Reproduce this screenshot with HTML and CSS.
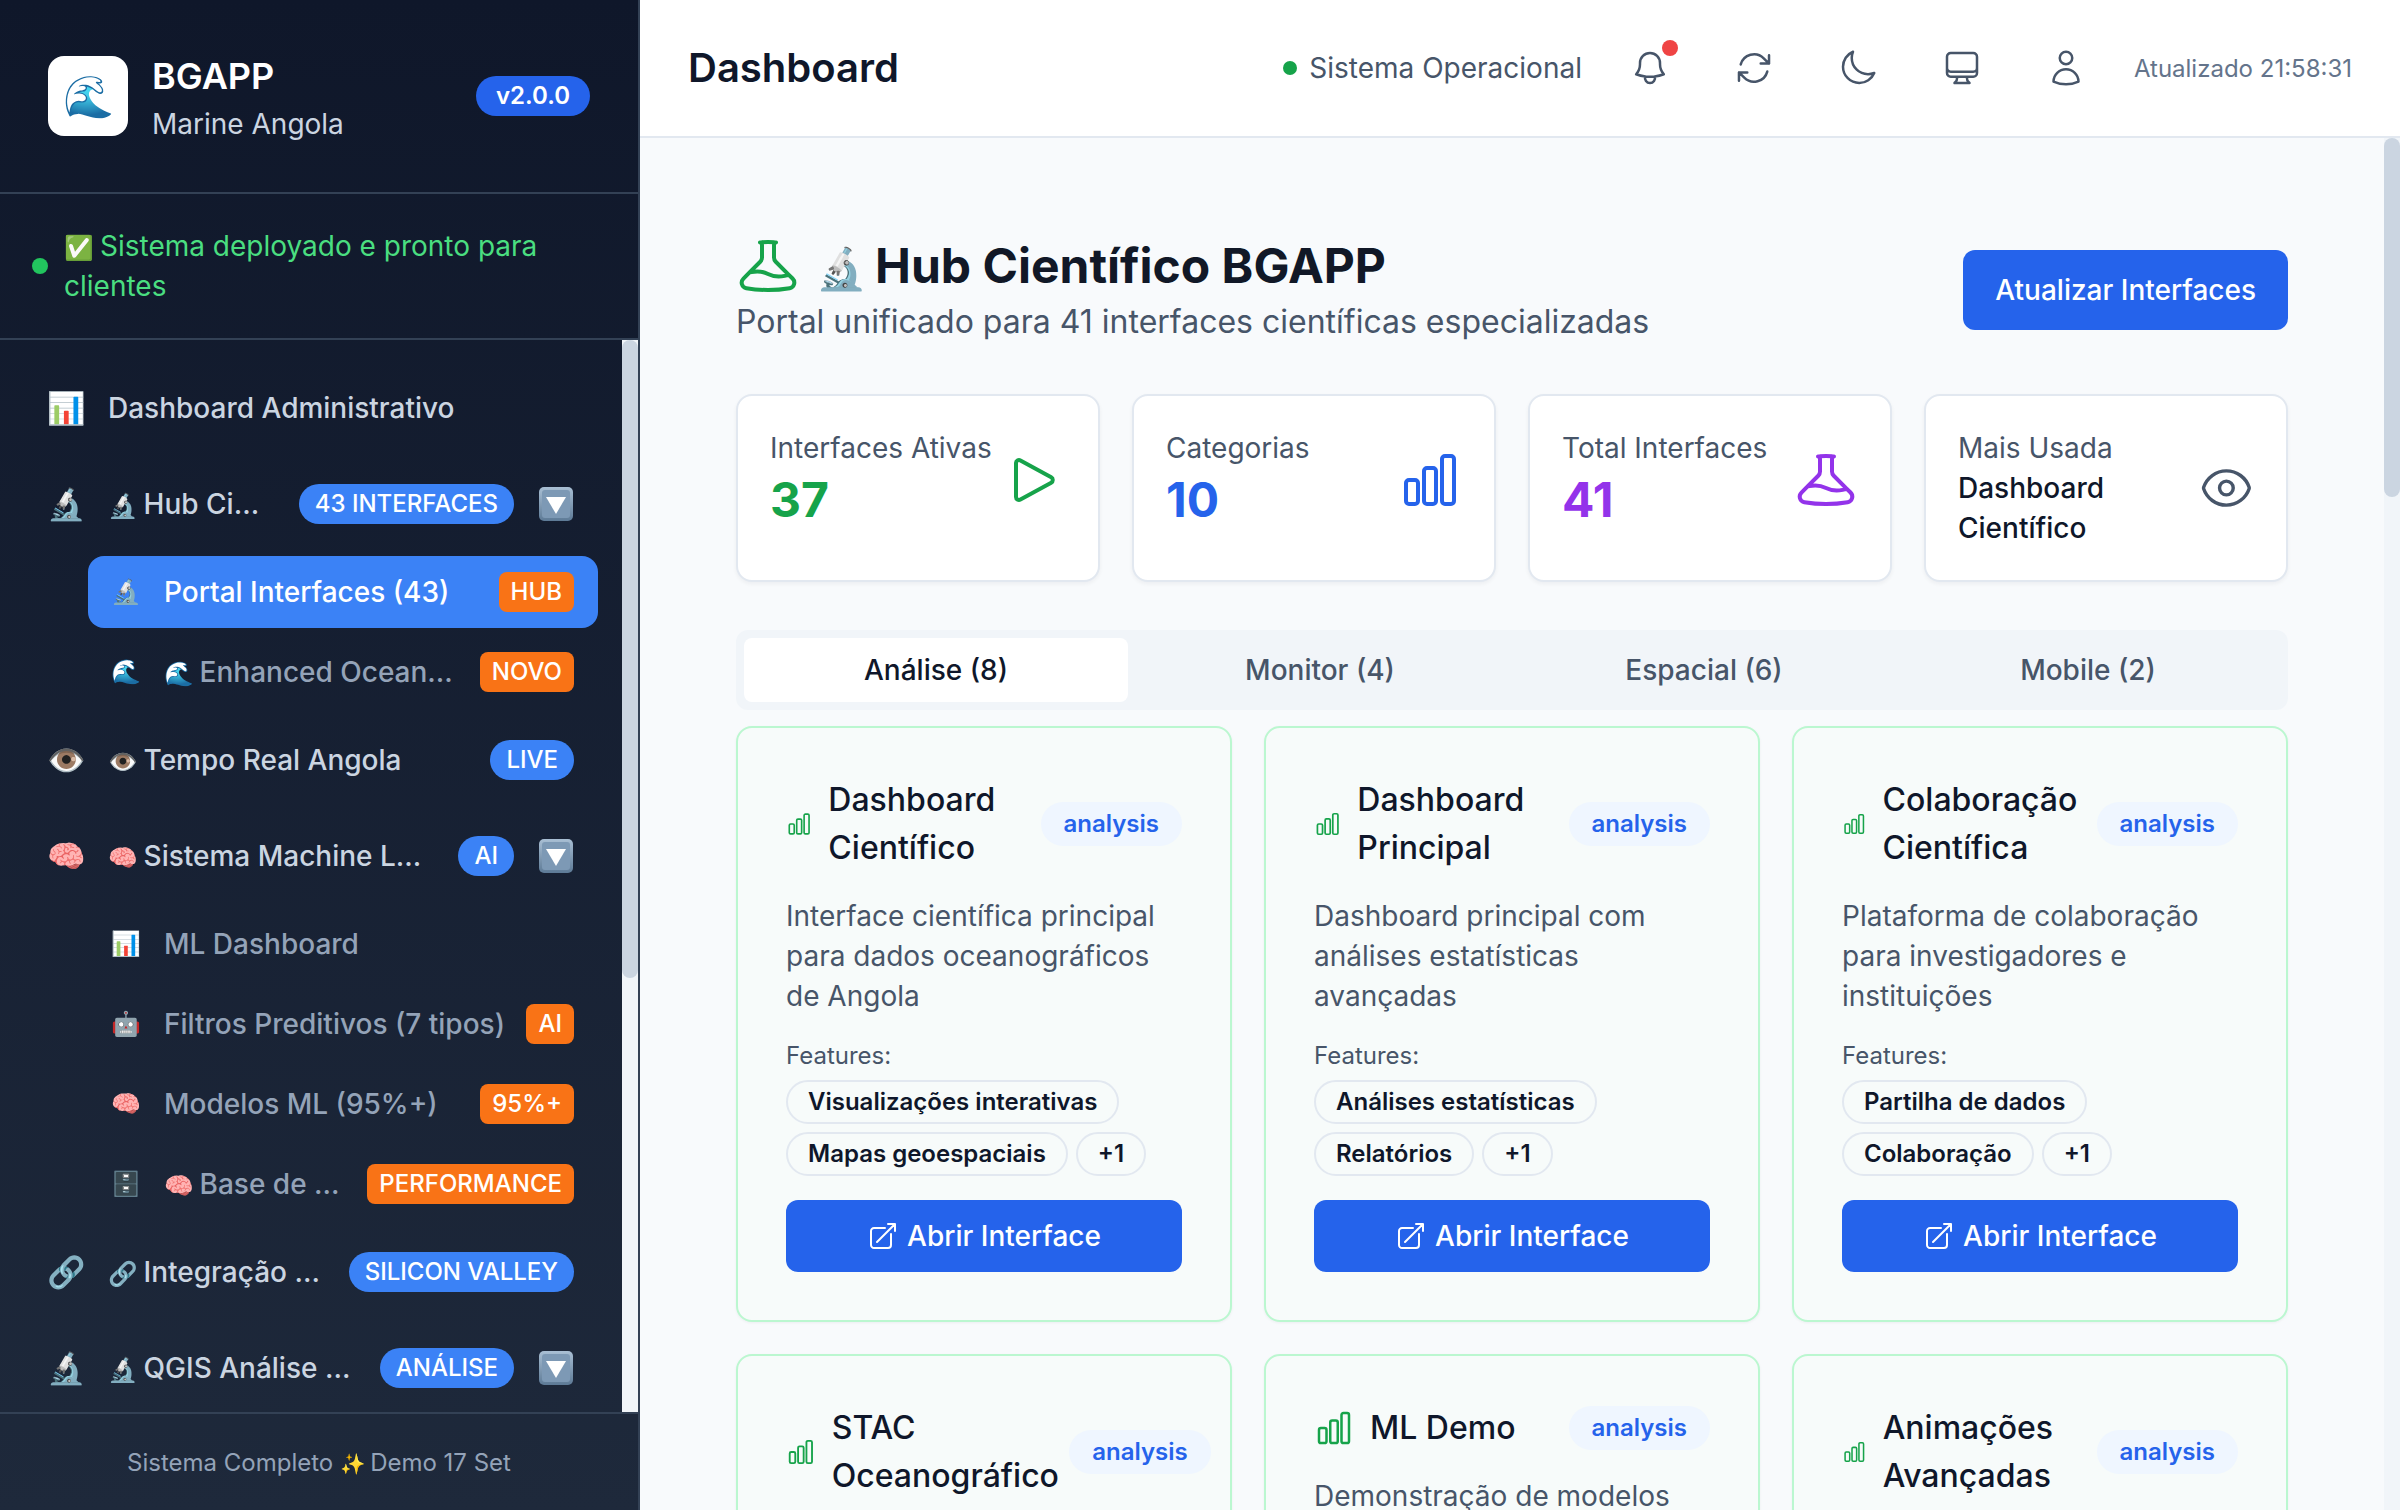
FILE: index.html
```html
<!DOCTYPE html>
<html lang="pt">
<head><meta charset="utf-8"><title>BGAPP</title><link rel="stylesheet" href="styles.css"></head>
<body>
<svg class="defs" width="0" height="0" aria-hidden="true">
<defs><linearGradient id="g-chev" x1="0" y1="0" x2="0" y2="1"><stop offset="0" stop-color="#a9bfd4"/><stop offset="1" stop-color="#5d7a96"/></linearGradient></defs>
<symbol id="i-chev" viewBox="0 0 36 36"><rect x="1" y="1" width="34" height="34" rx="5" fill="url(#g-chev)"/><rect x="4" y="4" width="28" height="28" rx="3" fill="#7d99b5"/><path d="M8 11h20L18 28Z" fill="#fff"/></symbol>
<symbol id="i-bell" viewBox="0 0 24 24"><path d="M14.857 17.082a23.848 23.848 0 0 0 5.454-1.31A8.967 8.967 0 0 1 18 9.75V9A6 6 0 0 0 6 9v.75a8.967 8.967 0 0 1-2.312 6.022c1.733.64 3.56 1.085 5.455 1.31m5.714 0a24.255 24.255 0 0 1-5.714 0m5.714 0a3 3 0 1 1-5.714 0"/></symbol>
<symbol id="i-refresh" viewBox="0 0 24 24"><path d="M16.023 9.348h4.992v-.001M2.985 19.644v-4.992m0 0h4.992m-4.993 0 3.181 3.183a8.25 8.25 0 0 0 13.803-3.7M4.031 9.865a8.25 8.25 0 0 1 13.803-3.7l3.181 3.182m0-4.991v4.99"/></symbol>
<symbol id="i-moon" viewBox="0 0 24 24"><path d="M21.752 15.002A9.72 9.72 0 0 1 18 15.75c-5.385 0-9.75-4.365-9.75-9.75 0-1.33.266-2.597.748-3.752A9.753 9.753 0 0 0 3 11.25C3 16.635 7.365 21 12.75 21a9.753 9.753 0 0 0 9.002-5.998Z"/></symbol>
<symbol id="i-desktop" viewBox="0 0 24 24"><path d="M9 17.25v1.007a3 3 0 0 1-.879 2.122L7.5 21h9l-.621-.621A3 3 0 0 1 15 18.257V17.25m6-12V15a2.25 2.25 0 0 1-2.25 2.25H5.25A2.25 2.25 0 0 1 3 15V5.25m18 0A2.25 2.25 0 0 0 18.75 3H5.25A2.25 2.25 0 0 0 3 5.25m18 0V12a2.25 2.25 0 0 1-2.25 2.25H5.25A2.25 2.25 0 0 1 3 12V5.25"/></symbol>
<symbol id="i-user" viewBox="0 0 24 24"><path d="M15.75 6a3.75 3.75 0 1 1-7.5 0 3.75 3.75 0 0 1 7.5 0ZM4.501 20.118a7.5 7.5 0 0 1 14.998 0A17.933 17.933 0 0 1 12 21.75c-2.676 0-5.216-.584-7.499-1.632Z"/></symbol>
<symbol id="i-play" viewBox="0 0 24 24"><path d="M5.25 5.653c0-.856.917-1.398 1.667-.986l11.54 6.347a1.125 1.125 0 0 1 0 1.972l-11.54 6.347a1.125 1.125 0 0 1-1.667-.986V5.653Z"/></symbol>
<symbol id="i-chart" viewBox="0 0 24 24"><path d="M3 13.125C3 12.504 3.504 12 4.125 12h2.25c.621 0 1.125.504 1.125 1.125v6.75C7.5 20.496 6.996 21 6.375 21h-2.25A1.125 1.125 0 0 1 3 19.875v-6.75ZM9.75 8.625c0-.621.504-1.125 1.125-1.125h2.25c.621 0 1.125.504 1.125 1.125v11.25c0 .621-.504 1.125-1.125 1.125h-2.25a1.125 1.125 0 0 1-1.125-1.125V8.625ZM16.5 4.125c0-.621.504-1.125 1.125-1.125h2.25C20.496 3 21 3.504 21 4.125v15.75c0 .621-.504 1.125-1.125 1.125h-2.25a1.125 1.125 0 0 1-1.125-1.125V4.125Z"/></symbol>
<symbol id="i-beaker" viewBox="0 0 24 24"><path d="M9.75 3.104v5.714a2.25 2.25 0 0 1-.659 1.591L5 14.5M9.75 3.104c-.251.023-.501.05-.75.082m.75-.082a24.301 24.301 0 0 1 4.5 0m0 0v5.714c0 .597.237 1.17.659 1.591L19.8 15.3M14.25 3.104c.251.023.501.05.75.082M19.8 15.3l-1.57.393A9.065 9.065 0 0 1 12 15a9.065 9.065 0 0 0-6.23-.693L5 14.5m14.8.8 1.402 1.402c1.232 1.232.65 3.318-1.067 3.611A48.309 48.309 0 0 1 12 21c-2.773 0-5.491-.235-8.135-.687-1.718-.293-2.3-2.379-1.067-3.61L5 14.5"/></symbol>
<symbol id="i-eye" viewBox="0 0 24 24"><path d="M2.036 12.322a1.012 1.012 0 0 1 0-.639C3.423 7.51 7.36 4.5 12 4.5c4.638 0 8.573 3.007 9.963 7.178.07.207.07.431 0 .639C20.577 16.49 16.64 19.5 12 19.5c-4.638 0-8.573-3.007-9.963-7.178Z"/><path d="M15 12a3 3 0 1 1-6 0 3 3 0 0 1 6 0Z"/></symbol>
<symbol id="i-open" viewBox="0 0 24 24"><path d="M13.5 6H5.25A2.25 2.25 0 0 0 3 8.25v10.5A2.25 2.25 0 0 0 5.25 21h10.5A2.25 2.25 0 0 0 18 18.75V10.5m-10.5 6L21 3m0 0h-5.25M21 3v5.25"/></symbol>
</svg>
<div class="app">
<aside class="sidebar">
  <header class="brand">
    <div class="logo"><span class="logo-e">🌊</span></div>
    <div class="brand-text"><div class="brand-name">BGAPP</div><div class="brand-sub">Marine Angola</div></div>
    <span class="version">v2.0.0</span>
  </header>
  <div class="deploy"><span class="deploy-dot"></span><span class="deploy-text"><span class="em">✅</span> Sistema deployado e pronto para clientes</span></div>
  <nav class="nav">
    <div class="nav-inner">
      <a class="row parent"><span class="ico">📊</span><span class="label">Dashboard Administrativo</span></a>
      <a class="row parent"><span class="ico">🔬</span><span class="label"><span class="em">🔬</span> Hub Científico</span><span class="pill">43 INTERFACES</span><svg class="chev"><use href="#i-chev"/></svg></a>
      <a class="row sub active"><span class="ico">🔬</span><span class="label">Portal Interfaces (43)</span><span class="tag">HUB</span></a>
      <a class="row sub"><span class="ico">🌊</span><span class="label"><span class="em">🌊</span> Enhanced Ocean…</span><span class="tag">NOVO</span></a>
      <a class="row parent"><span class="ico">👁️</span><span class="label"><span class="em">👁️</span> Tempo Real Angola</span><span class="pill">LIVE</span></a>
      <a class="row parent"><span class="ico">🧠</span><span class="label"><span class="em">🧠</span> Sistema Machine Learning</span><span class="pill">AI</span><svg class="chev"><use href="#i-chev"/></svg></a>
      <a class="row sub"><span class="ico">📊</span><span class="label">ML Dashboard</span></a>
      <a class="row sub"><span class="ico">🤖</span><span class="label">Filtros Preditivos (7 tipos)</span><span class="tag">AI</span></a>
      <a class="row sub"><span class="ico">🧠</span><span class="label">Modelos ML (95%+)</span><span class="tag">95%+</span></a>
      <a class="row sub"><span class="ico">🗄️</span><span class="label"><span class="em">🧠</span> Base de …</span><span class="tag">PERFORMANCE</span></a>
      <a class="row parent"><span class="ico">🔗</span><span class="label"><span class="em">🔗</span> Integração Silicon Valley</span><span class="pill">SILICON VALLEY</span></a>
      <a class="row parent"><span class="ico">🔬</span><span class="label"><span class="em">🔬</span> QGIS Análise Avançada</span><span class="pill">ANÁLISE</span><svg class="chev"><use href="#i-chev"/></svg></a>
    </div>
    <div class="sbar"><div class="sthumb nav-thumb"></div></div>
  </nav>
  <footer class="side-foot"><span>Sistema Completo <span class="em">✨</span> Demo 17 Set</span></footer>
</aside>
<main class="main">
  <header class="topbar">
    <h2 class="page-title">Dashboard</h2>
    <div class="top-right">
      <div class="sys"><span class="sys-dot"></span>Sistema Operacional</div>
      <div class="top-icons">
        <button class="icon-btn"><svg class="hi"><use href="#i-bell"/></svg><span class="notif"></span></button>
        <button class="icon-btn"><svg class="hi"><use href="#i-refresh"/></svg></button>
        <button class="icon-btn"><svg class="hi"><use href="#i-moon"/></svg></button>
        <button class="icon-btn"><svg class="hi"><use href="#i-desktop"/></svg></button>
        <button class="icon-btn"><svg class="hi"><use href="#i-user"/></svg></button>
      </div>
      <div class="updated">Atualizado 21:58:31</div>
    </div>
  </header>
  <div class="content-wrap">
  <div class="content">
    <div class="hub-head">
      <div>
        <h1 class="hub-title"><svg class="big green"><use href="#i-beaker"/></svg><span><span class="em">🔬</span> Hub Científico BGAPP</span></h1>
        <p class="hub-sub">Portal unificado para 41 interfaces científicas especializadas</p>
      </div>
      <button class="primary">Atualizar Interfaces</button>
    </div>
    <section class="stats">
      <div class="stat"><div class="stat-in"><div><div class="stat-label">Interfaces Ativas</div><div class="stat-val green">37</div></div><svg class="stat-ico green"><use href="#i-play"/></svg></div></div>
      <div class="stat"><div class="stat-in"><div><div class="stat-label">Categorias</div><div class="stat-val blue">10</div></div><svg class="stat-ico blue"><use href="#i-chart"/></svg></div></div>
      <div class="stat"><div class="stat-in"><div><div class="stat-label">Total Interfaces</div><div class="stat-val purple">41</div></div><svg class="stat-ico purple"><use href="#i-beaker"/></svg></div></div>
      <div class="stat"><div class="stat-in"><div><div class="stat-label">Mais Usada</div><div class="stat-name">Dashboard Científico</div></div><svg class="stat-ico slate"><use href="#i-eye"/></svg></div></div>
    </section>
    <div class="tabs">
      <div class="tab on">Análise (8)</div><div class="tab">Monitor (4)</div><div class="tab">Espacial (6)</div><div class="tab">Mobile (2)</div>
    </div>
    <section class="cards">
      <article class="card">
        <div class="card-head"><div class="card-left"><svg class="card-ico"><use href="#i-chart"/></svg><h3 class="card-title">Dashboard Científico</h3></div><span class="kind">analysis</span></div>
        <p class="desc">Interface científica principal para dados oceanográficos de Angola</p>
        <div class="feat">Features:</div>
        <div class="chips"><span class="chip">Visualizações interativas</span><span class="chip">Mapas geoespaciais</span><span class="chip">+1</span></div>
        <button class="open"><svg class="open-ico"><use href="#i-open"/></svg>Abrir Interface</button>
      </article>
      <article class="card">
        <div class="card-head"><div class="card-left"><svg class="card-ico"><use href="#i-chart"/></svg><h3 class="card-title">Dashboard Principal</h3></div><span class="kind">analysis</span></div>
        <p class="desc">Dashboard principal com análises estatísticas avançadas</p>
        <div class="feat">Features:</div>
        <div class="chips"><span class="chip">Análises estatísticas</span><span class="chip">Relatórios</span><span class="chip">+1</span></div>
        <button class="open"><svg class="open-ico"><use href="#i-open"/></svg>Abrir Interface</button>
      </article>
      <article class="card">
        <div class="card-head"><div class="card-left"><svg class="card-ico"><use href="#i-chart"/></svg><h3 class="card-title">Colaboração Científica</h3></div><span class="kind">analysis</span></div>
        <p class="desc">Plataforma de colaboração para investigadores e instituições</p>
        <div class="feat">Features:</div>
        <div class="chips"><span class="chip">Partilha de dados</span><span class="chip">Colaboração</span><span class="chip">+1</span></div>
        <button class="open"><svg class="open-ico"><use href="#i-open"/></svg>Abrir Interface</button>
      </article>
      <article class="card">
        <div class="card-head"><div class="card-left"><svg class="card-ico"><use href="#i-chart"/></svg><h3 class="card-title">STAC Oceanográfico</h3></div><span class="kind">analysis</span></div>
      </article>
      <article class="card">
        <div class="card-head"><div class="card-left"><svg class="card-ico"><use href="#i-chart"/></svg><h3 class="card-title">ML Demo</h3></div><span class="kind">analysis</span></div>
        <p class="desc">Demonstração de modelos</p>
      </article>
      <article class="card">
        <div class="card-head"><div class="card-left"><svg class="card-ico"><use href="#i-chart"/></svg><h3 class="card-title">Animações Avançadas</h3></div><span class="kind">analysis</span></div>
      </article>
    </section>
  </div>
  <div class="sbar"><div class="sthumb main-thumb"></div></div>
  </div>
</main>
</div>
</body>
</html>
```
FILE: styles.css
```css
*{box-sizing:border-box}
html,body{margin:0;padding:0;height:100%;overflow:hidden}
body{font-family:Inter,"Noto Sans",sans-serif;color:#0f172a;background:#f8fafc}
.defs{position:absolute}
.app{display:flex;height:1510px}
.em{font-size:.85em;letter-spacing:-.08em;line-height:0}
.sidebar{width:640px;flex:none;display:flex;flex-direction:column;background:linear-gradient(180deg,#0f172a,#1e293b);border-right:2px solid #334155;color:#fff}
.brand{height:194px;flex:none;display:flex;align-items:center;padding:0 48px;border-bottom:2px solid #334155}
.logo{width:80px;height:80px;background:#fff;border-radius:16px;display:flex;align-items:center;justify-content:center;flex:none}
.logo-e{font-size:41px;line-height:48px}
.brand-text{margin-left:24px;flex:1}
.brand-name{font-size:36px;line-height:56px;font-weight:600}
.brand-sub{font-size:28px;line-height:40px;color:#cbd5e1}
.version{background:#2563eb;border-radius:20px;height:40px;line-height:40px;padding:0 20px;font-size:24px;font-weight:600}
.deploy{height:146px;flex:none;display:flex;align-items:center;gap:16px;padding:0 32px;border-bottom:2px solid #334155;color:#4ade80;font-size:28px;line-height:40px}
.deploy-dot{width:16px;height:16px;border-radius:50%;background:#22c55e;flex:none}
.nav{position:relative;flex:1;min-height:0;overflow:hidden;padding-right:16px}
.sbar{position:absolute;top:0;right:0;bottom:0;width:16px;background:#f1f5f9}
.sthumb{background:#cbd5e1;border-radius:8px}
.nav-thumb{height:638px}
.main-thumb{height:359px}
.nav-inner{display:flex;flex-direction:column;gap:8px;padding:24px 24px 0}
.row{display:flex;align-items:center;padding:0 24px;border-radius:16px;font-size:28px;line-height:40px;font-weight:500}
.parent{height:88px;color:#cbd5e1}
.sub{height:72px;margin-left:64px;color:#94a3b8}
.active{background:#3b82f6;color:#fff}
.ico{flex:none;width:36px;margin-right:24px;font-size:31px;line-height:36px;text-align:center;white-space:nowrap;display:flex;justify-content:center}
.sub .ico{width:28px;font-size:24px}
.label{flex:1;min-width:0;white-space:nowrap;overflow:hidden;text-overflow:ellipsis}
.pill{flex:none;height:40px;line-height:40px;padding:0 16px;border-radius:20px;background:#3b82f6;color:#fff;font-size:24px;margin-left:28px}
.tag{flex:none;height:40px;line-height:40px;padding:0 12px;border-radius:8px;background:#f97316;color:#fff;font-size:24px;margin-left:16px}
.chev{flex:none;width:36px;height:36px;margin-left:24px}
.side-foot{height:98px;flex:none;border-top:2px solid #334155;display:flex;align-items:center;justify-content:center;font-size:24px;color:#94a3b8}
.main{flex:1;min-width:0;display:flex;flex-direction:column}
.topbar{height:138px;flex:none;display:flex;align-items:center;justify-content:space-between;padding:0 48px;background:#fff;border-bottom:2px solid #e2e8f0}
.page-title{margin:0 0 2px;font-size:40px;font-weight:600}
.top-right{display:flex;align-items:center;gap:32px}
.sys{display:flex;align-items:center;gap:12px;font-size:28px;color:#475569}
.sys-dot{width:14px;height:14px;border-radius:50%;background:#16a34a}
.top-icons{display:flex;gap:32px}
.icon-btn{position:relative;width:72px;height:72px;padding:16px;border:0;background:none;color:#475569}
.hi{display:block;width:40px;height:40px;fill:none;stroke:currentColor;stroke-width:1.5;stroke-linecap:round;stroke-linejoin:round}
.notif{position:absolute;top:8px;right:8px;width:16px;height:16px;border-radius:50%;background:#ef4444}
.updated{font-size:24px;color:#64748b}
.content-wrap{position:relative;flex:1;min-height:0;overflow:hidden}
.content{padding:96px 112px 0 96px;background:#f8fafc;height:100%;overflow:hidden}
.hub-head{display:flex;align-items:center;justify-content:space-between}
.hub-title{margin:0;display:flex;align-items:center;gap:16px;font-size:48px;line-height:64px;font-weight:700;color:#111827}
.hub-sub{margin:0;font-size:32px;line-height:48px;color:#475569}
.big{display:block;flex:none;width:64px;height:64px;fill:none;stroke:currentColor;stroke-width:1.5;stroke-linecap:round;stroke-linejoin:round}
.stat-ico{display:block;flex:0 1 auto;width:64px;height:64px;min-width:0;fill:none;stroke:currentColor;stroke-width:1.5;stroke-linecap:round;stroke-linejoin:round}
.green{color:#16a34a}.blue{color:#2563eb}.purple{color:#9333ea}.slate{color:#475569}
.primary{height:80px;padding:0 32px;border:0;border-radius:12px;background:#2563eb;color:#fff;font:500 28px Inter,sans-serif}
.stats{display:grid;grid-template-columns:repeat(4,1fr);gap:32px;margin-top:48px}
.stat{background:#fff;border:2px solid #e2e8f0;border-radius:16px;padding:32px;box-shadow:0 2px 4px rgba(15,23,42,.05)}
.stat-in{display:flex;align-items:center;justify-content:space-between}
.stat-label{font-size:28px;line-height:40px;color:#475569}
.stat-val{font-size:48px;line-height:64px;font-weight:700}
.stat-name{font-size:28px;line-height:40px;font-weight:500}
.tabs{display:grid;grid-template-columns:repeat(4,1fr);margin-top:48px;height:80px;padding:8px;background:#f1f5f9;border-radius:12px}
.tab{display:flex;align-items:center;justify-content:center;font-size:28px;font-weight:500;color:#475569;border-radius:8px}
.on{background:#fff;color:#0f172a}
.cards{display:grid;grid-template-columns:repeat(3,minmax(0,1fr));gap:32px;margin-top:16px;align-content:start}
.card{border:2px solid #bbf7d0;border-radius:16px;background:#f7fbfa;padding:48px;box-shadow:0 1px 3px rgba(15,23,42,.05);min-height:596px}
.card-head{display:flex;align-items:center;justify-content:space-between}
.card-left{display:flex;align-items:center;gap:16px}
.card-ico{width:40px;height:40px;min-width:0;flex:0 1 auto;color:#16a34a;fill:none;stroke:currentColor;stroke-width:1.5;stroke-linecap:round;stroke-linejoin:round}
.card-title{margin:0;font-size:32px;line-height:48px;font-weight:500;color:#0f172a}
.kind{flex:none;height:44px;line-height:44px;padding:0 23px;border-radius:22px;background:#eff6ff;color:#2563eb;font-size:24px;font-weight:600}
.desc{margin:24px 0 0;font-size:28px;line-height:40px;color:#475569}
.feat{margin-top:24px;font-size:24px;line-height:32px;color:#475569}
.chips{display:flex;flex-wrap:wrap;gap:8px;margin-top:8px}
.chip{height:44px;line-height:40px;padding:0 20px;border:2px solid #e2e8f0;border-radius:22px;font-size:24px;font-weight:600;color:#0f172a}
.open{display:flex;align-items:center;justify-content:center;gap:8px;width:100%;height:72px;margin-top:24px;border:0;border-radius:12px;background:#2563eb;color:#fff;font:500 28px Inter,sans-serif}
.open-ico{width:32px;height:32px;fill:none;stroke:currentColor;stroke-width:1.5;stroke-linecap:round;stroke-linejoin:round}
```
